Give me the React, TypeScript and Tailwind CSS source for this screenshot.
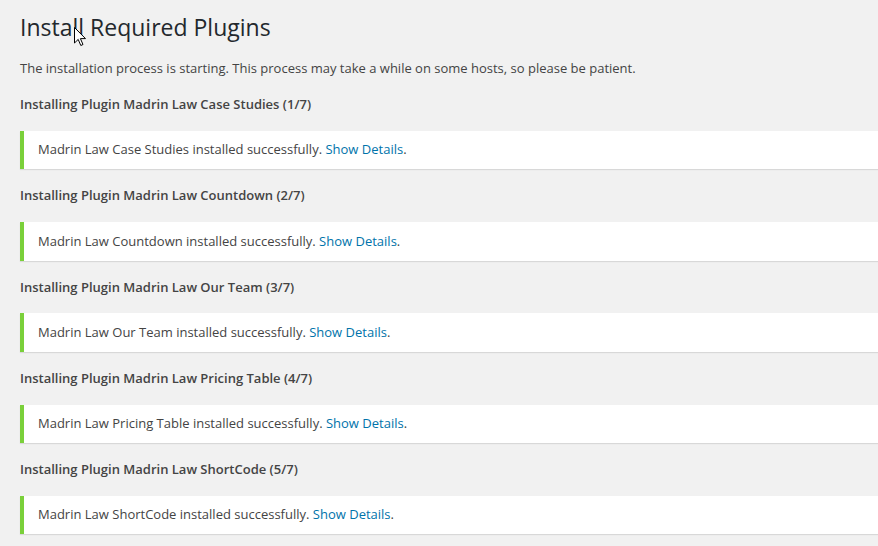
const plugins = [
  { name: "Madrin Law Case Studies", n: 1 },
  { name: "Madrin Law Countdown", n: 2 },
  { name: "Madrin Law Our Team", n: 3 },
  { name: "Madrin Law Pricing Table", n: 4 },
  { name: "Madrin Law ShortCode", n: 5 },
];

function Cursor() {
  return (
    <svg
      className="absolute left-[74px] top-[27px]"
      width="13"
      height="20"
      viewBox="0 0 13 20"
    >
      <path
        d="M0.5 0.5 L0.5 16 L4.2 12.4 L6.8 18.5 L9 17.5 L6.4 11.6 L11.5 11.6 Z"
        fill="#fff"
        stroke="#000"
        strokeWidth="1"
        strokeLinejoin="round"
      />
    </svg>
  );
}

export default function App() {
  return (
    <div
      className="relative h-[546px] overflow-hidden bg-[#f1f1f1] pl-5 text-[13px] text-[#444]"
      style={{ fontFamily: '"Open Sans", "Noto Sans", sans-serif' }}
    >
      <h1 className="pt-[13px] pb-1 text-[23px] leading-[29px] font-normal text-[#23282d]">
        Install Required Plugins
      </h1>
      <p className="mt-[12.5px] leading-[19.5px]">
        The installation process is starting. This process may take a while on some hosts, so please be patient.
      </p>
      {plugins.map((p) => (
        <div key={p.n}>
          <h2 className="mt-[17px] text-[13px] leading-[19.5px] font-semibold text-[#444]">
            Installing Plugin {p.name} ({p.n}/7)
          </h2>
          <div className="mt-[16.25px] w-[900px] border-l-4 border-[#7ad03a] bg-white px-3 py-px shadow-[0_1px_1px_0_rgba(0,0,0,0.1)]">
            <p className="my-[6.5px] p-[2px] leading-[19.5px]">
              {p.name} installed successfully.{" "}
              <a href="#" className="text-[#0073aa]">
                Show Details
              </a>
              .
            </p>
          </div>
        </div>
      ))}
      <Cursor />
    </div>
  );
}
